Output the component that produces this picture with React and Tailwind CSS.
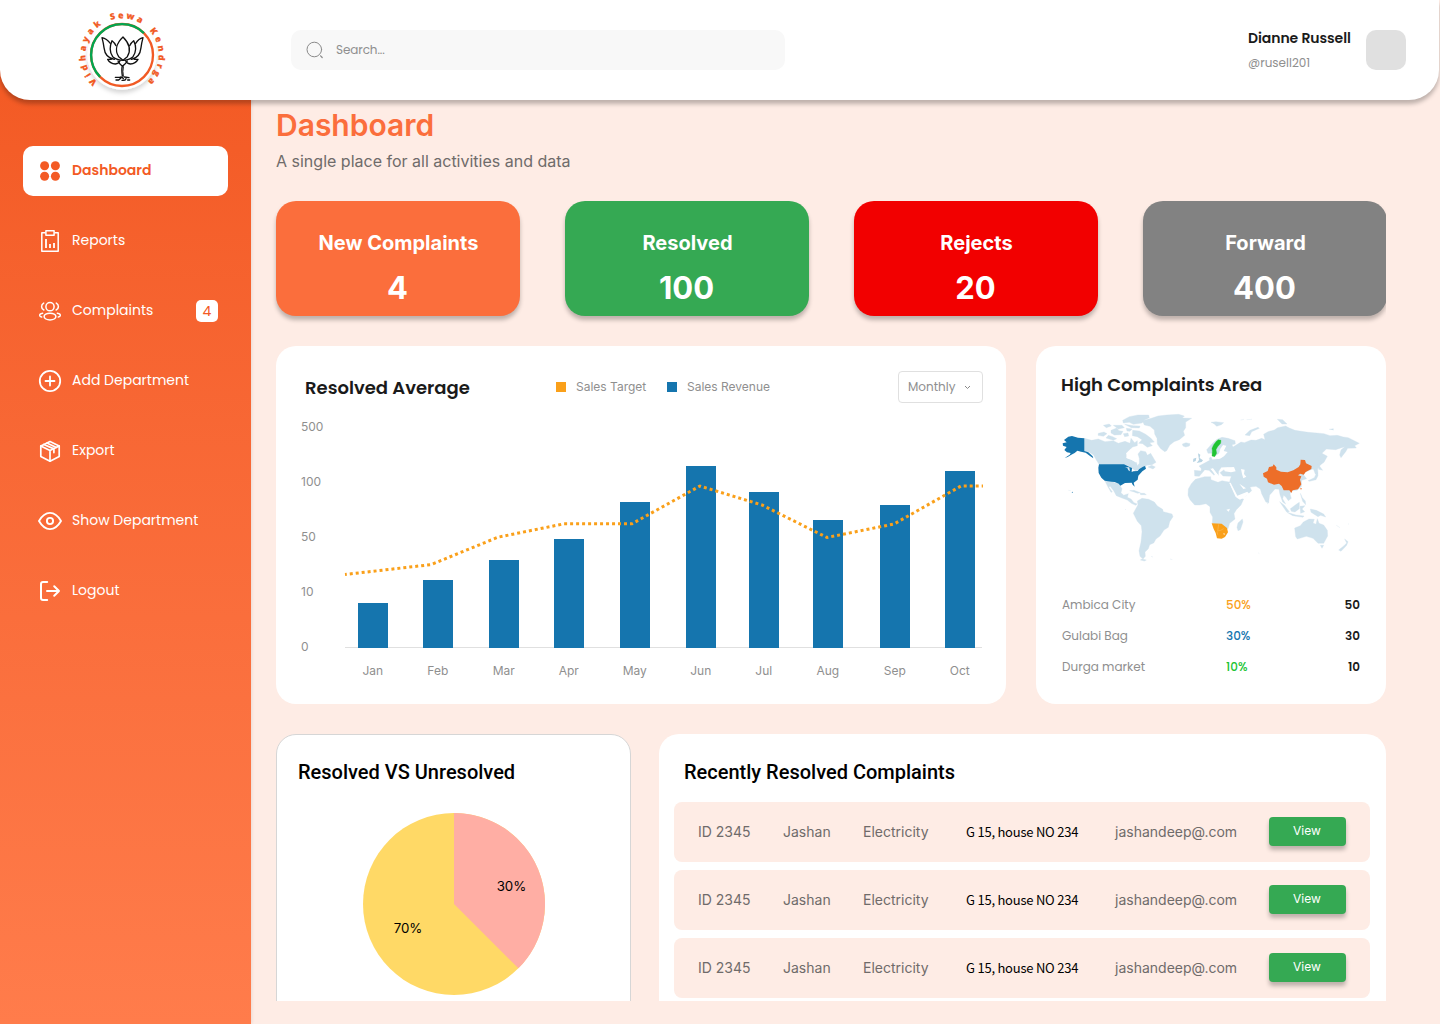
import React from "react";

const bars = [
  ["Jan", 358, 603], ["Feb", 423, 580], ["Mar", 489, 560], ["Apr", 554, 539], ["May", 620, 502],
  ["Jun", 686, 466], ["Jul", 749, 492], ["Aug", 813, 520], ["Sep", 880, 505], ["Oct", 945, 471],
];
const ticks = [["500", 427], ["100", 482], ["50", 537], ["10", 592], ["0", 647]];
const geo = "font-[Poppins,Inter,sans-serif]";

function Logo() {
  return (
    <svg width="130" height="110" viewBox="0 0 390 330" className="block">
      <defs>
        <path id="ring" d="M186 275 A110 110 0 0 1 186 55 A110 110 0 0 1 186 275" />
        <filter id="soft" x="-20%" y="-20%" width="140%" height="150%">
          <feDropShadow dx="0" dy="10" stdDeviation="6" floodOpacity="0.16" />
        </filter>
      </defs>
      <circle cx="186" cy="165" r="104" fill="#fff" filter="url(#soft)" />
      <circle cx="186" cy="165" r="93" fill="#fff" stroke="#f15a24" strokeWidth="7" />
      <path d="M120.24 230.76 A93 93 0 0 1 251.76 99.24" fill="none" stroke="#00a650" strokeWidth="7" />
      <g fill="#f15a24" stroke="#f15a24" strokeWidth="0.6" fontFamily="'Open Sans', sans-serif" fontWeight="800" fontSize="26">
        <text textLength="198"><textPath href="#ring" startOffset="81">Vidhayak</textPath></text>
        <text textLength="94"><textPath href="#ring" startOffset="311">Sewa</textPath></text>
        <text textLength="168"><textPath href="#ring" startOffset="438">Kendrga</textPath></text>
      </g>
      <g fill="none" stroke="#111" strokeWidth="4" strokeLinejoin="round" strokeLinecap="round">
        <path d="M189 111 C171 128 163 150 176 170 L189 181 L202 170 C214 150 206 128 189 111Z" />
        <path d="M168 137 Q164 128 156 122 C148 140 150 158 158 170 Q168 179 187 181" />
        <path d="M209 137 Q213 128 221 122 C230 140 227 158 219 170 Q210 179 191 181" />
        <path d="M151 130 Q140 116 126 113 Q130 128 132 143 C134 162 144 175 163 178" />
        <path d="M227 130 Q236 116 249 113 Q245 128 243 143 C241 162 232 175 214 178" />
        <path d="M143 178 Q150 191 166 192 Q177 190 180 182 M143 178 L154 178" />
        <path d="M234 178 Q227 191 211 192 Q200 190 197 182 M234 178 L223 178" />
        <path d="M174 183 Q178 192 187 199 Q197 192 202 183 M187 198 Q184 208 187 228" />
        <path d="M190 200 Q187 214 190 229" strokeWidth="3" />
        <path d="M166 232 H179 Q186 229 190 236 M168 240 H176 L183 234 M186 241 Q196 242 198 236 M193 231 L207 233 M203 240 H209" />
      </g>
    </svg>
  );
}

function Icon({ name }) {
  const p = { width: 24, height: 24, viewBox: "0 0 24 24", fill: "none", stroke: "currentColor", strokeWidth: 1.5, strokeLinecap: "round", strokeLinejoin: "round", className: "shrink-0" };
  switch (name) {
    case "grid":
      return <svg {...p} fill="currentColor" stroke="none"><circle cx="6.6" cy="6.7" r="4.5" /><circle cx="17.4" cy="6.7" r="4.5" /><circle cx="6.6" cy="17.3" r="4.5" /><circle cx="17.4" cy="17.3" r="4.5" /></svg>;
    case "report":
      return <svg {...p} strokeLinecap="butt"><path d="M7.5 3.8H3.8V22.2H20.2V3.8H16.5" /><path d="M7.9 1.8H16.1V6.2H7.9Z" /><path d="M8 10V19M12 15V19M16 14V19" strokeWidth="1.8" /></svg>;
    case "users":
      return <svg {...p}><circle cx="12" cy="7.7" r="4.1" /><ellipse cx="12" cy="17.6" rx="5.9" ry="3.3" /><path d="M5.7 4.1A3.8 3.8 0 0 0 5.9 11M18.3 4.1A3.8 3.8 0 0 1 18.1 11M4.7 14.2C2.8 14.5 1.6 15.4 1.7 16.4 1.8 17.2 2.5 17.9 3.7 18.1M19.3 14.2C21.2 14.5 22.4 15.4 22.3 16.4 22.2 17.2 21.5 17.9 20.3 18.1" /></svg>;
    case "plus":
      return <svg {...p} strokeWidth="1.8"><circle cx="12" cy="12" r="10.2" /><path d="M12 7.5V16.5M7.5 12H16.5" /></svg>;
    case "box":
      return <svg {...p} strokeWidth="1.7"><path d="M12 2.6L21.2 6.9V17.6L12 22.2L2.8 17.6V6.9Z" /><path d="M2.8 6.9L12 11.6L21.2 6.9M12 11.6V22.2M5.8 5.5L15.9 9.9V13.6M8.9 4.1L18.4 8.5" /></svg>;
    case "eye":
      return <svg {...p} strokeWidth="1.9"><path d="M1 12C4.2 6.4 7.9 3.9 12 3.9S19.8 6.4 23 12C19.8 17.6 16.1 20.1 12 20.1S4.2 17.6 1 12Z" /><circle cx="12" cy="12" r="3.1" /></svg>;
    default:
      return <svg {...p} strokeWidth="2"><path d="M9.2 2.9H5Q3 2.9 3 4.9V19.1Q3 21.1 5 21.1H9.2M9 12H21M16.2 7.2L21 12L16.2 16.8" /></svg>;
  }
}

const nav = [
  ["grid", "Dashboard"], ["report", "Reports"], ["users", "Complaints"], ["plus", "Add Department"],
  ["box", "Export"], ["eye", "Show Department"], ["logout", "Logout"],
];

function Sidebar() {
  return (
    <aside className="flex w-[251px] shrink-0 flex-col gap-5 bg-linear-to-b from-[#f35a24] to-[#ff7c4b] pt-[76px] pl-[23px] shadow-[1px_0_3px_rgba(0,0,0,0.08)]">
      {nav.map(([icon, label], i) => (
        <div key={label} className={`flex h-[50px] w-[205px] items-center rounded-[10px] pl-[15px] text-sm ${geo} ${i === 0 ? "bg-white font-semibold text-[#f35a24]" : "text-white"}`}>
          <Icon name={icon} />
          <span className="mb-[2px] ml-2.5 grow">{label}</span>
          {label === "Complaints" && (
            <span className="mr-2.5 flex h-[22px] w-[22px] items-center justify-center rounded-[5px] bg-white text-sm text-[#f35a24]">4</span>
          )}
        </div>
      ))}
    </aside>
  );
}

function Header() {
  return (
    <header className={`relative z-10 flex h-[100px] w-[1439px] rounded-b-[30px] bg-white shadow-[0_4px_4px_rgba(0,0,0,0.25)] ${geo}`}>
      <div className="ml-[60px] h-[100px] w-[130px]"><Logo /></div>
      <div className="mt-[30px] ml-[101px] flex h-10 w-[494px] items-center rounded-[10px] bg-[#f8f8f8] pl-[15px] text-xs text-[#8f8f8f]">
        <svg width="18" height="18" viewBox="0 0 18 18" fill="none" stroke="#8a8a8a" strokeLinecap="round"><circle cx="8.3" cy="8.5" r="7.3" /><path d="M14.6 14.8L16.2 16.5" strokeWidth="1.2" /></svg>
        <span className="ml-[12px] tracking-[-0.1px]">Search...</span>
      </div>
      <div className="mt-[28px] ml-auto flex">
        <div className="w-[118px]">
          <div className="text-sm leading-5 font-semibold tracking-[-0.07px] whitespace-nowrap text-[#1a1a1a]">Dianne Russell</div>
          <div className="mt-[6px] text-xs leading-[18px] text-[#8f8f8f]">@rusell201</div>
        </div>
        <div className="mt-[2px] mr-[33px] h-10 w-10 rounded-[10px] bg-[#e0e0e0]" />
      </div>
    </header>
  );
}

function Chart() {
  return (
    <section className="h-[358px] w-[730px] rounded-[20px] bg-white pt-[25px]">
      <div className="flex h-8 items-center pr-[23px] pl-[29px] text-xs text-[#8f8f8f]">
        <h2 className={`mt-[2px] w-[251px] text-[18px] font-semibold text-[#1a1a1a] ${geo}`}>Resolved Average</h2>
        <span className="h-2.5 w-2.5 bg-[#faa01a]" />
        <span className="ml-2.5 w-[91px]">Sales Target</span>
        <span className="h-2.5 w-2.5 bg-[#1575ae]" />
        <span className="ml-2.5">Sales Revenue</span>
        <div className={`ml-auto flex h-8 w-[85px] items-center rounded-[4px] border border-[#e0e0e0] pl-[9px] ${geo}`}>
          <span className="w-[56px]">Monthly</span>
          <svg width="7" height="5" viewBox="0 0 7 5" fill="none" stroke="#888"><path d="M1 1L3.5 3.5L6 1" /></svg>
        </div>
      </div>
      <svg width="730" height="301" viewBox="276 403 730 301" className="block" fontFamily="Inter, sans-serif" fontSize="12" fill="#8f8f8f">
        {ticks.map(([t, y]) => <text key={t} x="301" y={y + 4}>{t}</text>)}
        <path d="M345 647.5H982" stroke="#e0e0e0" />
        {bars.map(([m, x, y]) => (
          <g key={m}>
            <rect x={x} y={y} width="30" height={648 - y} fill="#1575ae" />
            <text x={x + 14.8} y="675" textAnchor="middle">{m}</text>
          </g>
        ))}
        <path d="M345 574.5L431 564.6L498 537.2L564 523.8H632L700 486L762 505L827 537.5L894 524L961 486H983" fill="none" stroke="#faa01a" strokeWidth="3" strokeDasharray="3 2.99" strokeDashoffset="1.2" />
      </svg>
    </section>
  );
}

function WorldMap() {
  return (
    <svg width="320" height="170" viewBox="0 0 960 510" className="block">
      <g fill="#cfe2ed" stroke="#cfe2ed" strokeWidth="1" strokeLinejoin="round">
        {/* North America */}
        <path d="M103 115L125 121L145 117L165 125L190 122L205 130L225 124L240 130L243 115L254 128L262 122L262 137L248 141L238 150L228 160L230 174L246 180L259 186L262 197L268 190L268 175L264 162L272 152L287 155L292 166L302 160L312 177L318 187L306 194L290 196L284 201L268 211L257 212L247 206L235 197L147 193L139 180L131 165L117 156L103 154Z" />
        <path d="M294 201L305 196L316 201L309 207Z" />
        <path d="M165 243L182 244L207 252L216 266L213 278L221 286L235 281L232 292L243 297L252 308L262 312L257 316L244 310L232 300L216 294L199 287L191 272L180 258L177 262L187 276L183 277L174 261Z" />
        <path d="M239 272L252 271L271 278L263 280L250 275ZM270 280L283 280L289 284L272 284Z" />
        {/* Arctic islands */}
        <path d="M183 91L200 84L207 92L219 94L213 104L193 105L183 99ZM145 100L162 96L171 101L160 109L144 106ZM160 76L178 72L184 78L169 83ZM190 76L216 76L223 83L205 87ZM175 106L188 110L200 116L190 121L168 114ZM229 85L246 87L240 94L231 93ZM220 101L234 99L236 108L224 110Z" />
        <path d="M218 61L238 50L264 45L296 45L298 53L283 60L276 69L250 73L238 67L220 69ZM224 73L250 77L270 78L268 84L244 83Z" />
        <path d="M248 91L268 93L287 103L302 114L313 126L299 128L307 137L292 142L278 131L266 130L276 119L262 110L247 107Z" />
        <path d="M277 62L304 55L324 48L350 45L386 43L403 48L397 54L425 55L407 66L407 83L400 94L404 106L388 119L372 125L359 136L350 152L344 155L331 145L322 132L321 115L314 102L313 90L300 79L283 75Z" />
        <path d="M397 132L408 128L420 131L418 138L407 141L399 138Z" />
        {/* South America */}
        <path d="M262 303L276 295L296 298L313 306L322 318L338 328L340 335L366 342L369 350L359 365L355 382L342 390L330 408L318 417L311 429L299 434L295 446L285 456L286 469L279 477L270 469L267 452L273 426L276 395L274 377L262 364L250 340L257 327L264 314ZM276 477L289 480L283 483L271 480Z" />
        {/* Africa */}
        <path d="M436 238L464 230L482 230L483 239L504 247L516 242L537 246L545 263L558 287L563 295L581 297L573 315L559 329L552 341L555 357L539 370L534 386L513 379L487 370L488 351L480 337L480 320L468 311L449 315L434 315L420 299L414 286L415 267L424 251Z" />
        <path d="M577 357L579 366L571 389L564 392L561 382L564 369Z" />
        {/* Europe and Asia */}
        <path d="M433 211L453 213L454 206L447 198L468 187L479 181L478 174L483 171L487 179L503 177L515 172L522 160L532 157L517 155L520 143L529 137L519 134L510 147L507 160L495 168L488 160L474 160L470 149L486 131L501 118L516 112L534 115L555 122L556 132L546 134L549 141L562 133L573 126L583 128L603 120L618 121L635 115L645 119L641 103L654 95L673 90L683 83L707 78L718 84L735 91L754 94L775 97L800 99L822 101L840 107L862 106L880 111L895 113L928 130L914 137L919 144L893 145L887 155L873 173L869 165L873 150L884 140L857 149L829 147L816 160L832 169L822 187L811 195L803 206L804 224L796 222L790 207L783 209L766 216L761 225L770 236L755 241L754 260L741 271L724 272L720 282L724 295L715 302L708 292L701 286L698 296L707 312L698 306L690 284L687 268L675 267L659 285L656 305L648 307L635 281L631 267L618 259L600 261L605 272L588 287L565 295L554 275L538 248L541 237L544 229L519 228L510 218L522 209L544 213L552 201L532 201L514 202L506 214L505 226L496 217L488 205L480 206L497 220L492 226L477 211L464 210L453 223L448 229L434 228Z" />
        <path d="M585 105L600 91L624 82L628 85L605 95L599 107ZM483 67L498 65L521 68L514 74L500 79L492 71ZM682 58L698 59L711 72L696 72ZM572 60L582 58M590 59L606 58M837 88L850 86L850 91" />
        <path d="M774 242L793 233L801 216L804 227L798 239L779 244ZM804 193L810 200L818 211L806 208ZM808 170L812 184L812 193L806 180Z" />
        <path d="M652 298L657 307L653 311ZM689 305L703 316L718 335L710 336ZM711 337L738 345L762 348L759 352L728 347ZM721 326L740 312L748 307L748 326L735 336L724 334ZM750 319L765 317L756 327L764 335L752 340ZM751 280L757 293L766 303L767 314L758 304ZM781 327L799 331L821 342L827 351L812 346L804 350L783 337Z" />
        {/* Oceania */}
        <path d="M802 356L807 370L821 375L832 391L833 408L821 430L804 430L789 415L769 409L742 417L737 410L734 384L751 377L760 366L777 357L793 358L789 369L798 373ZM811 436L821 436L816 445ZM884 417L894 425L890 436L873 454L866 450L882 437L890 429ZM859 376L870 383M625 459L628 461M303 469L309 471M360 477L367 479M225 328L228 329M55 271L62 272M894 371L897 373" />
      </g>
      {/* Inland water */}
      <g fill="#fff">
        <path d="M483 208L489 205L505 226L500 231ZM464 211L474 213L485 224L480 228L467 224Z" />
        <path d="M521 203L536 206L552 201L557 214L543 217L524 214ZM573 207L584 209L582 222L589 230L580 235L576 222ZM557 291L538 249L542 248L562 287L592 275L598 282L570 299ZM568 251L588 265L580 267ZM529 329L540 326L536 335ZM542 348L547 369M232 158L242 148L258 152L263 169L259 188L245 180L229 174Z" />
        <path d="M502 177L509 158L518 139L529 137L521 153L533 156L522 169L510 176Z" />
      </g>
      <g fill="#b8d4e3"><path d="M444 160L451 164L449 174L459 181L455 186L440 189L447 180ZM430 176L439 173L437 183L429 186Z" /></g>
      <g fill="#1575ae">
        <path d="M103 115L103 153L115 157L128 169L130 175L119 167L107 158L93 155L82 152L74 159L64 164L53 171L44 174L59 164L62 159L51 157L43 150L50 141L39 137L38 130L50 127L42 120L55 110L66 108L84 113Z" />
        <path d="M147 193L222 193L239 201L246 204L245 216L250 214L263 213L268 207L279 200L285 198L288 206L277 214L265 227L263 239L251 248L254 260L248 254L245 248L225 249L211 257L206 251L194 246L184 245L164 242L154 233L146 219L145 203Z" />
        <circle cx="67" cy="277" r="1.5" />
      </g>
      <path d="M225 202L238 202L240 214L235 211L232 204Z" fill="#fff" opacity=".85" />
      <path d="M505 119L513 121L512 130L503 140L498 149L500 160L494 170L486 168L487 153L486 145L491 134L499 124Z" fill="#20c433" stroke="#20c433" strokeWidth="1" />
      <path d="M639 220L653 213L657 201L668 199L671 193L679 202L679 209L693 215L713 217L730 211L746 201L751 193L752 179L765 180L768 190L785 198L784 207L767 216L761 224L751 221L744 226L754 229L750 239L754 253L744 268L728 271L724 279L718 271L701 271L695 258L687 251L672 254L654 247L651 236L641 230Z" fill="#ed6e29" />
      <path d="M751 264L755 264L753 271Z" fill="#ed6e29" />
      <path d="M485 370L515 371L531 384L534 397L525 411L515 416L501 415L497 399L491 387Z" fill="#faa01a" />
      <path d="M506 373L503 393L512 391L521 386M501 394L503 404" fill="none" stroke="#fbc168" strokeWidth="1.5" />
      <path d="M520 400L525 401L522 405Z" fill="#fff" />
    </svg>
  );
}

const areas = [
  ["Ambica City", "50%", "50", "text-[#faa01a]"],
  ["Gulabi Bag", "30%", "30", "text-[#1575ae]"],
  ["Durga market", "10%", "10", "text-[#20c433]"],
];

function Areas() {
  return (
    <section className={`h-[358px] w-[350px] rounded-[20px] bg-white pt-[24px] ${geo}`}>
      <h2 className="h-[30px] pl-[25px] text-[18px] leading-[30px] font-semibold text-[#1a1a1a]">High Complaints Area</h2>
      <div className="pl-[14px]"><WorldMap /></div>
      <div className="mt-[19px] flex flex-col pr-[26px] pl-[26px] text-xs">
        {areas.map(([n, p, v, c]) => (
          <div key={n} className="flex h-[31px] items-center">
            <span className="w-[164px] text-[#8f8f8f]">{n}</span>
            <span className={`font-medium ${c}`}>{p}</span>
            <span className="ml-auto font-semibold text-[#1a1a1a]">{v}</span>
          </div>
        ))}
      </div>
    </section>
  );
}

const stats = [
  ["New Complaints", "4", "bg-[#fb6e3c]"],
  ["Resolved", "100", "bg-[#35a953]"],
  ["Rejects", "20", "bg-[#f20000]"],
  ["Forward", "400", "bg-[#828282]"],
];

export default function App() {
  return (
    <div className="h-[1024px] w-[1440px] overflow-hidden bg-[#feece5] font-[Inter,sans-serif]">
      <Header />
      <div className="-mt-[30px] flex h-[954px]">
        <Sidebar />
        <main className="h-[931px] w-[1135px] overflow-hidden pt-[37px] pl-[25px]">
          <h1 className="text-[30px] leading-9 font-semibold text-[#fb6e3c]">Dashboard</h1>
          <p className="mt-[6px] text-base leading-6 text-[#6f6b6a]">A single place for all activities and data</p>
          <div className="mt-[28px] flex gap-[45px]">
            {stats.map(([t, n, c]) => (
              <div key={t} className={`h-[115px] w-[244px] shrink-0 rounded-[20px] pt-[27px] text-center font-bold text-white shadow-[0_4px_4px_rgba(0,0,0,0.25)] ${c}`}>
                <div className="pl-px text-xl leading-[30px]">{t}</div>
                <div className="mt-[10px] pr-px text-[31px] leading-10">{n}</div>
              </div>
            ))}
          </div>
          <div className="mt-[30px] flex gap-[30px]"><Chart /><Areas /></div>
          <div className="mt-[30px] flex gap-[28px]">
            <section className="h-[330px] w-[355px] shrink-0 rounded-[20px] border border-[#d6d6d6] bg-white pt-[22px]">
              <h2 className="pl-[21px] font-[Roboto,sans-serif] text-xl leading-[30px] font-medium text-black">Resolved VS Unresolved</h2>
              <svg width="182" height="182" viewBox="-91 -91 182 182" className="mt-[26px] ml-[86px] block" fontFamily="Inter, sans-serif" fontSize="13.3" textAnchor="middle">
                <circle r="91" fill="#ffd966" />
                <path d="M0 0V-91A91 91 0 0 1 64.35 64.35Z" fill="#ffaea4" />
                <text x="57.5" y="-13">30%</text>
                <text x="-46" y="29">70%</text>
              </svg>
            </section>
            <section className="h-[330px] w-[727px] shrink-0 rounded-[20px] bg-white px-[15px] pt-[23px]">
              <h2 className="pl-2.5 font-[Roboto,sans-serif] text-xl leading-[30px] font-medium text-black">Recently Resolved Complaints</h2>
              <div className="mt-[15px] flex flex-col gap-2">
                {[0, 1, 2].map((i) => (
                  <div key={i} className="grid h-[60px] w-[696px] grid-cols-[85px_80px_103px_149px_154px_77px] items-center rounded-lg bg-[#feece5] pl-[24px] text-sm text-[#6f6b6a]">
                    <span>ID 2345</span>
                    <span>Jashan</span>
                    <span>Electricity</span>
                    <span className="font-['Noto_Sans_CJK_JP',sans-serif] text-[13px] tracking-[-0.23px] text-black">G 15, house NO 234</span>
                    <span>jashandeep@.com</span>
                    <button className="mb-px h-[29px] w-[77px] rounded-[4px] bg-[#35a953] pr-px pb-px text-xs text-white shadow-[0_4px_4px_rgba(0,0,0,0.25)]">View</button>
                  </div>
                ))}
              </div>
            </section>
          </div>
        </main>
      </div>
    </div>
  );
}
